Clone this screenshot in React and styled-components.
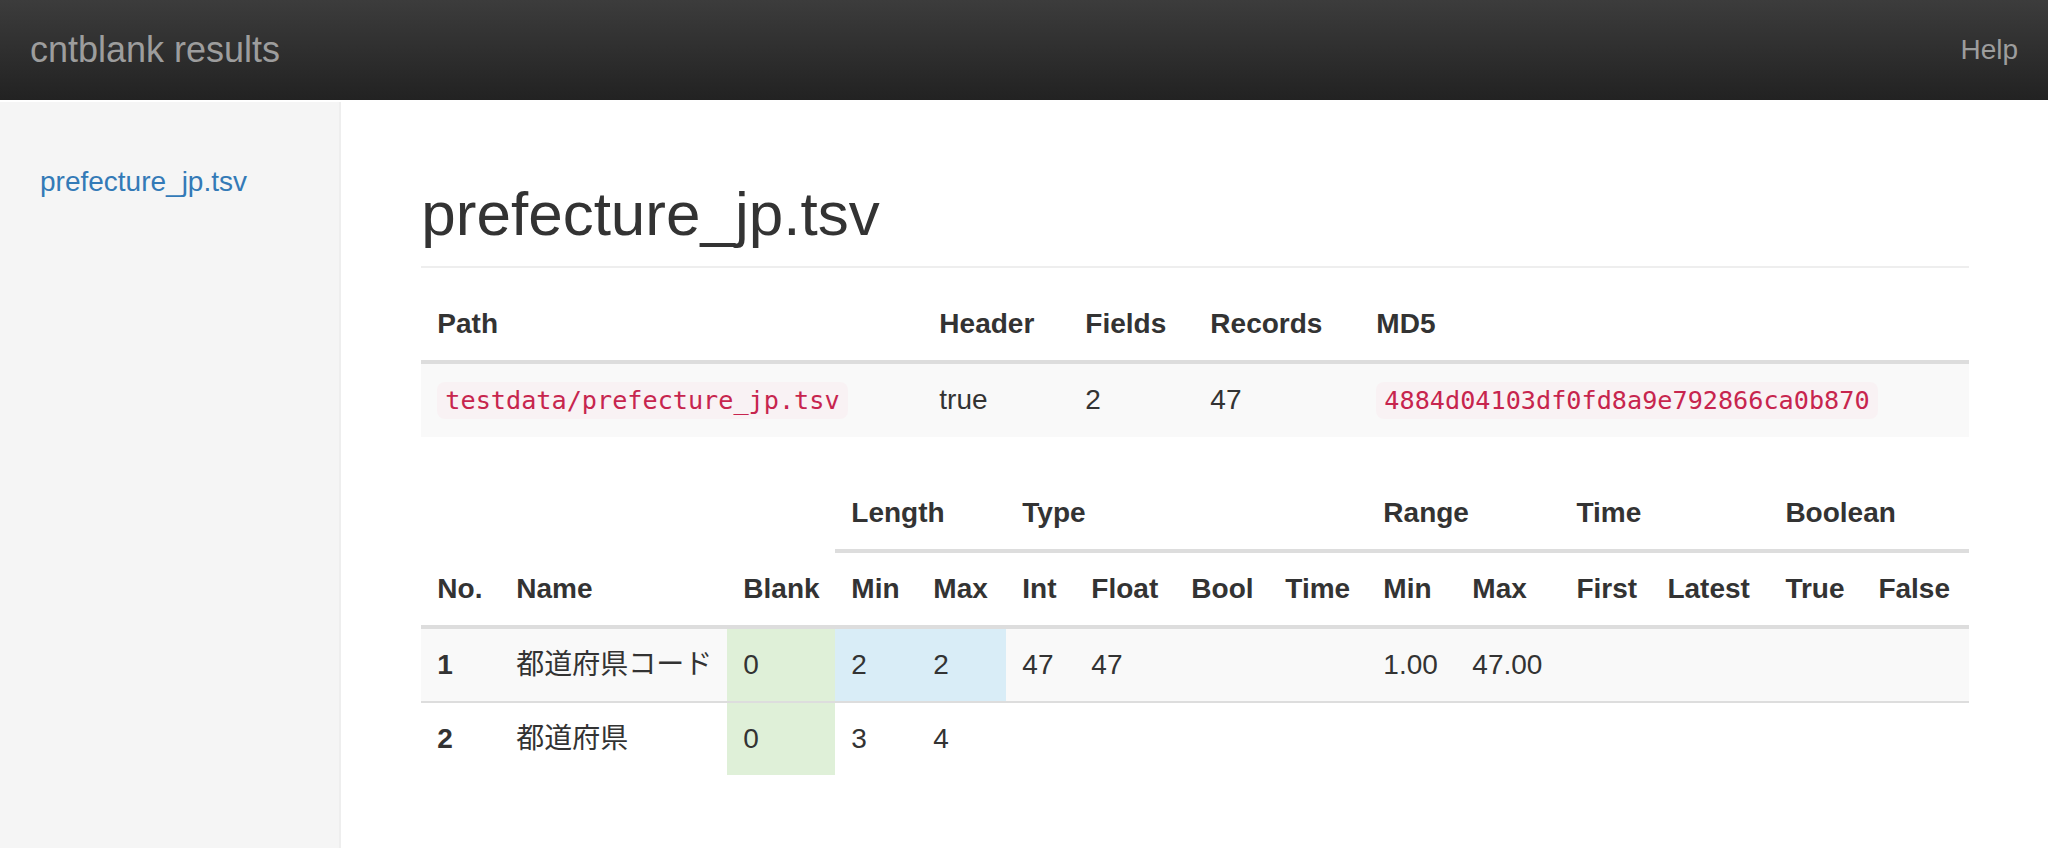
import React from 'react';
import styled, { createGlobalStyle } from 'styled-components';

const GlobalStyle = createGlobalStyle`
  html, body {
    margin: 0;
    padding: 0;
  }
  body {
    font-family: "Liberation Sans", Arial, "Noto Sans CJK JP", sans-serif;
    font-size: 28px;
    line-height: 40px;
    color: #333;
    background: #fff;
  }
  * {
    box-sizing: border-box;
  }
`;

const summary = {
  path: 'testdata/prefecture_jp.tsv',
  header: 'true',
  fields: 2,
  records: 47,
  md5: '4884d04103df0fd8a9e792866ca0b870',
};

const summaryCols = [502, 146, 125, 166, 609];

const groups = [
  { label: 'Length', span: 2 },
  { label: 'Type', span: 4 },
  { label: 'Range', span: 2 },
  { label: 'Time', span: 2 },
  { label: 'Boolean', span: 2 },
];

const subHeads = ['Min', 'Max', 'Int', 'Float', 'Bool', 'Time', 'Min', 'Max', 'First', 'Latest', 'True', 'False'];

const fieldCols = [79, 227, 108, 82, 89, 69, 100, 94, 98, 89, 104, 91, 118, 93, 107];

const fields = [
  {
    no: 1,
    name: '都道府県コード',
    blank: 0,
    lenMin: 2,
    lenMax: 2,
    lengthFixed: true,
    int: 47,
    float: 47,
    bool: '',
    time: '',
    rangeMin: '1.00',
    rangeMax: '47.00',
    first: '',
    latest: '',
    yes: '',
    no2: '',
  },
  {
    no: 2,
    name: '都道府県',
    blank: 0,
    lenMin: 3,
    lenMax: 4,
    lengthFixed: false,
    int: '',
    float: '',
    bool: '',
    time: '',
    rangeMin: '',
    rangeMax: '',
    first: '',
    latest: '',
    yes: '',
    no2: '',
  },
];

const App = () => (
  <Page>
    <GlobalStyle />
    <Navbar>
      <Brand href="#">cntblank results</Brand>
      <NavLink href="#">Help</NavLink>
    </Navbar>
    <Body>
      <Sidebar>
        <SideNav>
          <SideLink href="#">prefecture_jp.tsv</SideLink>
        </SideNav>
      </Sidebar>
      <Main>
        <PageHeader>prefecture_jp.tsv</PageHeader>

        <Table>
          <colgroup>
            {summaryCols.map((w, i) => <Col key={i} $w={w} />)}
          </colgroup>
          <thead>
            <tr>
              <Th>Path</Th>
              <Th>Header</Th>
              <Th>Fields</Th>
              <Th>Records</Th>
              <Th>MD5</Th>
            </tr>
          </thead>
          <tbody>
            <Tr $striped>
              <Td><Code>{summary.path}</Code></Td>
              <Td>{summary.header}</Td>
              <Td>{summary.fields}</Td>
              <Td>{summary.records}</Td>
              <Td><Code>{summary.md5}</Code></Td>
            </Tr>
          </tbody>
        </Table>

        <Table>
          <colgroup>
            {fieldCols.map((w, i) => <Col key={i} $w={w} />)}
          </colgroup>
          <thead>
            <tr>
              <Th rowSpan={2}>No.</Th>
              <Th rowSpan={2}>Name</Th>
              <Th rowSpan={2}>Blank</Th>
              {groups.map(g => (
                <Th key={g.label} colSpan={g.span}>{g.label}</Th>
              ))}
            </tr>
            <tr>
              {subHeads.map((h, i) => <Th key={i}>{h}</Th>)}
            </tr>
          </thead>
          <tbody>
            {fields.map((f, i) => (
              <Tr key={f.no} $striped={i % 2 === 0} $first={i === 0}>
                <Td $bold>{f.no}</Td>
                <Td>{f.name}</Td>
                <Td $tone="success">{f.blank}</Td>
                <Td $tone={f.lengthFixed ? 'info' : null}>{f.lenMin}</Td>
                <Td $tone={f.lengthFixed ? 'info' : null}>{f.lenMax}</Td>
                <Td>{f.int}</Td>
                <Td>{f.float}</Td>
                <Td>{f.bool}</Td>
                <Td>{f.time}</Td>
                <Td>{f.rangeMin}</Td>
                <Td>{f.rangeMax}</Td>
                <Td>{f.first}</Td>
                <Td>{f.latest}</Td>
                <Td>{f.yes}</Td>
                <Td>{f.no2}</Td>
              </Tr>
            ))}
          </tbody>
        </Table>
      </Main>
    </Body>
  </Page>
);

const Page = styled.div`
  min-height: 100vh;
  display: flex;
  flex-direction: column;
`;

const Navbar = styled.div`
  height: 100px;
  flex-shrink: 0;
  display: flex;
  align-items: center;
  justify-content: space-between;
  background: linear-gradient(to bottom, #3c3c3c 0%, #222 100%);
`;

const Brand = styled.a`
  padding: 0 30px;
  font-size: 36px;
  line-height: 40px;
  color: #9d9d9d;
  text-decoration: none;
`;

const NavLink = styled.a`
  padding: 0 30px;
  font-size: 28px;
  line-height: 40px;
  color: #9d9d9d;
  text-decoration: none;
`;

const Body = styled.div`
  flex: 1;
  display: flex;
  margin-top: 2px;
`;

const Sidebar = styled.div`
  width: 16.6667%;
  flex-shrink: 0;
  padding: 40px;
  background: #f5f5f5;
  border-right: 2px solid #eee;
`;

const SideNav = styled.div`
  margin: 0 -42px 40px -40px;
  display: flex;
  flex-direction: column;
`;

const SideLink = styled.a`
  display: block;
  padding: 20px 40px;
  color: #337ab7;
  text-decoration: none;
`;

const Main = styled.div`
  flex: 1;
  padding: 38px 80px 40px;
`;

const PageHeader = styled.h1`
  margin: 40px 0 20px;
  padding-bottom: 18px;
  border-bottom: 2px solid #eee;
  font-size: 62px;
  font-weight: 500;
  line-height: 1.1;
  color: #333;
`;

const Table = styled.table`
  width: 100%;
  table-layout: fixed;
  border-collapse: collapse;
  border-spacing: 0;
  margin-bottom: 40px;
`;

const Col = styled.col`
  width: ${props => props.$w}px;
`;

const Th = styled.th`
  padding: 16px;
  text-align: left;
  vertical-align: bottom;
  font-weight: bold;
  line-height: 40px;
  white-space: nowrap;
  border-bottom: 4px solid #ddd;
`;

const Tr = styled.tr`
  background: ${props => (props.$striped ? '#f9f9f9' : 'transparent')};
`;

const tones = {
  success: '#dff0d8',
  info: '#d9edf7',
};

const Td = styled.td`
  padding: 16px;
  line-height: 40px;
  vertical-align: top;
  white-space: nowrap;
  border-top: 2px solid #ddd;
  font-weight: ${props => (props.$bold ? 'bold' : 'normal')};
  background: ${props => (props.$tone ? tones[props.$tone] : 'transparent')};
  tr:first-child > & {
    border-top: 0;
  }
`;

const Code = styled.code`
  padding: 4px 8px;
  font-family: "DejaVu Sans Mono", Menlo, monospace;
  font-size: 90%;
  color: #c7254e;
  background: #f9f2f4;
  border-radius: 8px;
`;

export default App;
